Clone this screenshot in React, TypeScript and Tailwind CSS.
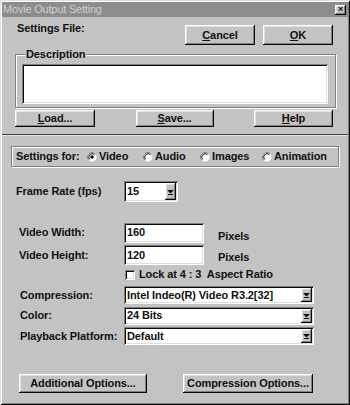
import React from "react";

const raised =
  "shadow-[inset_-1px_-1px_0_#0a0a0a,inset_1px_1px_0_#ffffff,inset_-2px_-2px_0_#808080,inset_2px_2px_0_#dfdfdf]";
const sunken =
  "shadow-[inset_1px_1px_0_#808080,inset_-1px_-1px_0_#ffffff,inset_2px_2px_0_#0a0a0a,inset_-2px_-2px_0_#dfdfdf]";

function Btn({ children, className = "" }: { children: React.ReactNode; className?: string }) {
  return (
    <div className={`flex items-center justify-center bg-[#c3c3c3] font-bold text-[#111] ${raised} ${className}`}>
      {children}
    </div>
  );
}

function Arrow() {
  return (
    <svg width="7" height="6" viewBox="0 0 7 6">
      <path d="M0 1h7L3.5 4.5z" fill="#111" />
      <rect x="1" y="5" width="5" height="1" fill="#111" />
    </svg>
  );
}

function Combo({ value, className = "" }: { value: string; className?: string }) {
  return (
    <div className={`flex items-stretch bg-white ${sunken} pl-[3px] pr-[2px] py-[2px] ${className}`}>
      <span className="flex-1 flex items-center font-bold text-[#111]">{value}</span>
      <div className={`w-[11px] bg-[#c3c3c3] flex items-center justify-center ${raised}`}>
        <Arrow />
      </div>
    </div>
  );
}

function Field({ value, className = "" }: { value: string; className?: string }) {
  return (
    <div className={`flex items-center bg-white ${sunken} pl-[3px] font-bold text-[#111] ${className}`}>{value}</div>
  );
}

function Radio({ checked, label }: { checked?: boolean; label: string }) {
  return (
    <div className="flex items-center">
      <svg width="10" height="10" viewBox="0 0 10 10" className="mr-[2px]">
        <circle cx="5" cy="5" r="4.5" fill="#fff" />
        <path d="M1.8 8.2A4.5 4.5 0 0 1 8.2 1.8" stroke="#808080" strokeWidth="1" fill="none" />
        <path d="M2.6 7.4A3.4 3.4 0 0 1 7.4 2.6" stroke="#111" strokeWidth="1" fill="none" />
        {checked && <circle cx="5" cy="5" r="1.8" fill="#111" />}
      </svg>
      <span className="font-bold text-[#111]">{label}</span>
    </div>
  );
}

export default function App() {
  return (
    <div
      className={`w-[350px] h-[405px] bg-[#c3c3c3] p-[2px] flex flex-col font-['Liberation_Sans',Arial,sans-serif] text-[11px] leading-[13px] tracking-[-0.1px] text-[#111] shadow-[inset_1px_1px_0_#dfdfdf,inset_-1px_-1px_0_#0a0a0a,inset_2px_2px_0_#ffffff,inset_-2px_-2px_0_#808080]`}
    >
      {/* Title bar */}
      <div className="h-[15px] bg-[#8c8c8c] flex items-center justify-between pl-[1px] pr-[2px]">
        <span className="text-[#cfcfcf] text-[11px] tracking-[-0.2px]">Movie Output Setting</span>
        <div className={`w-[11px] h-[10px] bg-[#c3c3c3] flex items-center justify-center ${raised}`}>
          <span className="text-[9px] leading-[9px] font-bold text-[#111]">×</span>
        </div>
      </div>

      {/* Settings File row */}
      <div className="flex justify-between mt-[5px] pl-[15px] pr-[15px]">
        <span className="font-bold">Settings File:</span>
        <div className="flex gap-[8px] mt-[3px]">
          <Btn className="w-[70px] h-[20px]">
            <span>
              <u>C</u>ancel
            </span>
          </Btn>
          <Btn className="w-[70px] h-[20px]">
            <span>
              <u>O</u>K
            </span>
          </Btn>
        </div>
      </div>

      {/* Description group */}
      <fieldset className="ml-[13px] w-[321px] mt-[3px] border border-[#808080] shadow-[1px_1px_0_#ffffff,inset_1px_1px_0_#ffffff] pl-[6px] pr-[7px] pb-[3px]">
        <legend className="ml-[3px] px-[1px] bg-[#c3c3c3] font-bold">Description</legend>
        <div className={`mt-[3px] h-[40px] bg-white ${sunken}`} />
      </fieldset>

      {/* Load Save Help */}
      <div className="flex justify-between ml-[13px] w-[318px] mt-[2px]">
        <Btn className="w-[80px] h-[17px]">
          <span>
            <u>L</u>oad...
          </span>
        </Btn>
        <Btn className="w-[78px] h-[17px]">
          <span>
            <u>S</u>ave...
          </span>
        </Btn>
        <Btn className="w-[79px] h-[17px]">
          <span>
            <u>H</u>elp
          </span>
        </Btn>
      </div>

      {/* Separator */}
      <div className="mt-[7px] h-[2px] border-t border-t-[#404040] border-b border-b-[#e8e8e8]" />

      {/* Settings for panel */}
      <div className="ml-[9px] w-[328px] h-[21px] mt-[10px] border border-[#808080] shadow-[1px_1px_0_#ffffff,inset_1px_1px_0_#ffffff] flex items-center pl-[4px]">
        <span className="font-bold w-[71px]">Settings for:</span>
        <div className="w-[56px]">
          <Radio checked label="Video" />
        </div>
        <div className="w-[57px]">
          <Radio label="Audio" />
        </div>
        <div className="w-[62px]">
          <Radio label="Images" />
        </div>
        <Radio label="Animation" />
      </div>

      {/* Frame rate */}
      <div className="flex items-center mt-[14px] pl-[14px]">
        <span className="font-bold w-[108px]">Frame Rate (fps)</span>
        <Combo value="15" className="w-[54px] h-[21px]" />
      </div>

      {/* Width / Height */}
      <div className="flex flex-col gap-[2px] mt-[20px]">
        <div className="flex items-center pl-[17px]">
          <span className="font-bold w-[105px]">Video Width:</span>
          <Field value="160" className="w-[80px] h-[20px]" />
          <span className="font-bold ml-[14px] mt-[8px]">Pixels</span>
        </div>
        <div className="flex items-center pl-[17px]">
          <span className="font-bold w-[105px]">Video Height:</span>
          <Field value="120" className="w-[80px] h-[20px]" />
          <span className="font-bold ml-[14px] mt-[5px]">Pixels</span>
        </div>
      </div>

      {/* Lock checkbox */}
      <div className="flex items-center ml-[123px] mt-[3px]">
        <div className={`w-[10px] h-[10px] bg-white ${sunken}`} />
        <span className="font-bold ml-[4px] whitespace-pre">Lock at 4 : 3  Aspect Ratio</span>
      </div>

      {/* Combos */}
      <div className="flex flex-col gap-[2.5px] mt-[5px]">
        <div className="flex items-center pl-[18px]">
          <span className="font-bold w-[104px]">Compression:</span>
          <Combo value="Intel Indeo(R) Video R3.2[32]" className="w-[190px] h-[18px]" />
        </div>
        <div className="flex items-center pl-[18px]">
          <span className="font-bold w-[104px]">Color:</span>
          <Combo value="24 Bits" className="w-[190px] h-[18px]" />
        </div>
        <div className="flex items-center pl-[18px]">
          <span className="font-bold w-[104px] whitespace-nowrap">Playback Platform:</span>
          <Combo value="Default" className="w-[190px] h-[18px]" />
        </div>
      </div>

      {/* Bottom buttons */}
      <div className="flex mt-[29px] pl-[17px] gap-[36px]">
        <Btn className="w-[128px] h-[19px]">Additional Options...</Btn>
        <Btn className="w-[130px] h-[19px]">Compression Options...</Btn>
      </div>
    </div>
  );
}
